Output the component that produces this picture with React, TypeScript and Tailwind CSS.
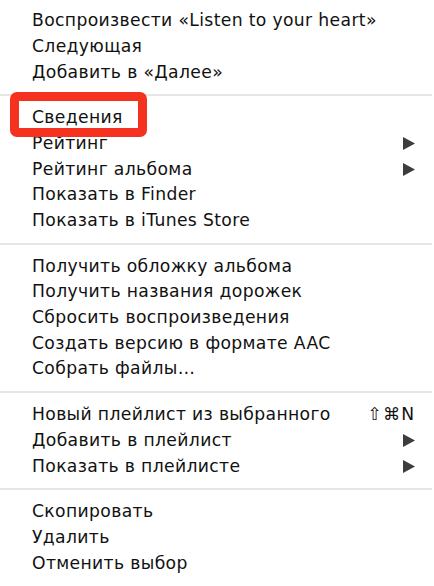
import React from "react";

type Item = { label: string; submenu?: boolean; shortcut?: string };

const groups: Item[][] = [
  [
    { label: "Воспроизвести «Listen to your heart»" },
    { label: "Следующая" },
    { label: "Добавить в «Далее»" },
  ],
  [
    { label: "Сведения" },
    { label: "Рейтинг", submenu: true },
    { label: "Рейтинг альбома", submenu: true },
    { label: "Показать в Finder" },
    { label: "Показать в iTunes Store" },
  ],
  [
    { label: "Получить обложку альбома" },
    { label: "Получить названия дорожек" },
    { label: "Сбросить воспроизведения" },
    { label: "Создать версию в формате AAC" },
    { label: "Собрать файлы…" },
  ],
  [
    { label: "Новый плейлист из выбранного", shortcut: "⇧⌘N" },
    { label: "Добавить в плейлист", submenu: true },
    { label: "Показать в плейлисте", submenu: true },
  ],
  [{ label: "Скопировать" }, { label: "Удалить" }, { label: "Отменить выбор" }],
];

const Arrow = () => (
  <svg width="12" height="13" viewBox="0 0 12 13">
    <polygon points="0,0 12,6.5 0,13" fill="#3d3d3d" />
  </svg>
);

const App: React.FC = () => {
  return (
    <div
      className="relative w-[434px] h-[586px] bg-white overflow-hidden text-[#111]"
      style={{ fontFamily: '"DejaVu Sans", "Liberation Sans", sans-serif' }}
    >
      <div className="pt-[8px]">
        {groups.map((group, gi) => (
          <div key={gi}>
            {gi > 0 && (
              <div className="h-[20px] flex items-center">
                <div className="w-[432px] h-[2px] bg-[#e6e6e6]" />
              </div>
            )}
            {group.map((item) => (
              <div
                key={item.label}
                className="h-[25.7px] flex items-center justify-between pl-[32px] pr-[19px] text-[17.2px] leading-none tracking-[0.35px]"
              >
                <span>{item.label}</span>
                {item.submenu && <Arrow />}
                {item.shortcut && <span className="tracking-[1px]">{item.shortcut}</span>}
              </div>
            ))}
          </div>
        ))}
      </div>

      {/* red highlight annotation */}
      <div className="absolute left-[10px] top-[92px] w-[137px] h-[45px] border-[9px] border-[#f4321f] rounded-[7px]" />
    </div>
  );
};

export default App;
